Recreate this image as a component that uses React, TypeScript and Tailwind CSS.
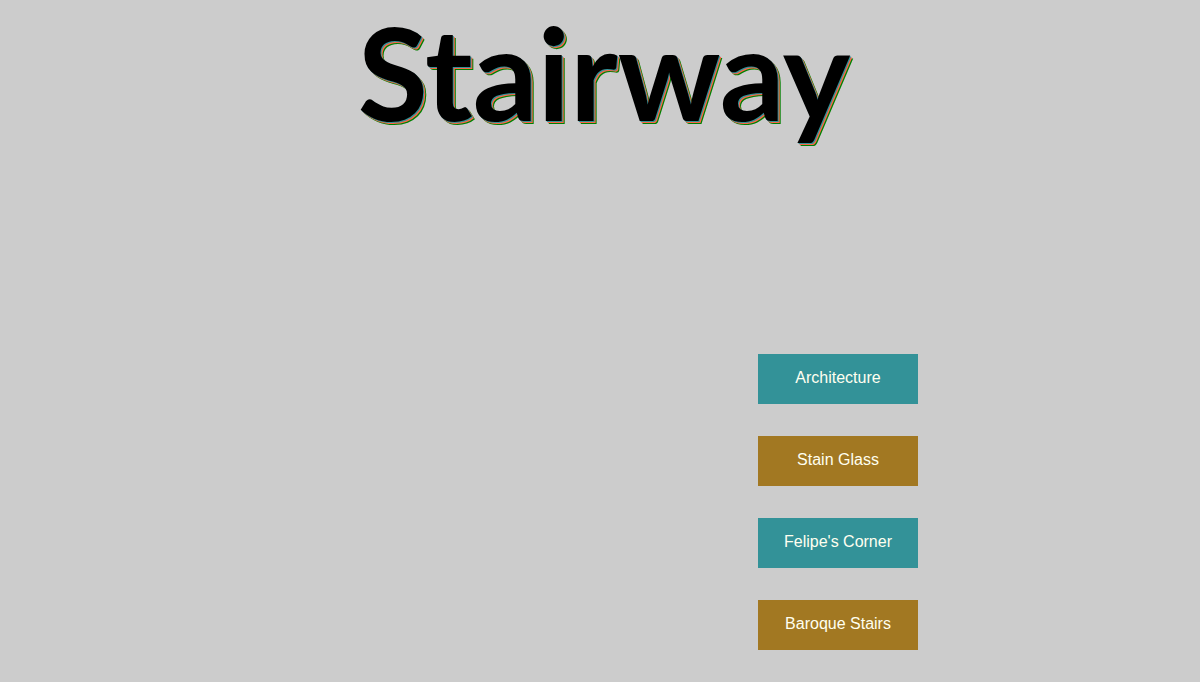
const links = [
  { label: "Architecture", href: "#architecture", color: "bg-[#339298]" },
  { label: "Stain Glass", href: "#stain-glass", color: "bg-[#a27822]" },
  { label: "Felipe's Corner", href: "#felipes-corner", color: "bg-[#339298]" },
  { label: "Baroque Stairs", href: "#baroque-stairs", color: "bg-[#a27822]" },
];

export default function App() {
  return (
    <div className="min-h-screen bg-[#cccccc] font-['Liberation_Sans',Arial,sans-serif]">
      {/* TITLE */}
      <header>
        <h1 className="pl-2 text-center font-['Lato',sans-serif] text-[128px] leading-[144px] font-bold text-black [text-shadow:1px_1px_0_#339298,2px_2px_0_tomato,3px_3px_0_green]">
          Stairway
        </h1>
      </header>

      {/* MENU */}
      <nav className="mt-[210px] mr-[23.5%] flex flex-col items-end gap-8 pb-8">
        {links.map((link) => (
          <a
            key={link.href}
            href={link.href}
            className={`h-[50px] w-40 pt-3 text-center text-base leading-6 text-[#fffff0] hover:opacity-90 ${link.color}`}
          >
            {link.label}
          </a>
        ))}
      </nav>
    </div>
  );
}
